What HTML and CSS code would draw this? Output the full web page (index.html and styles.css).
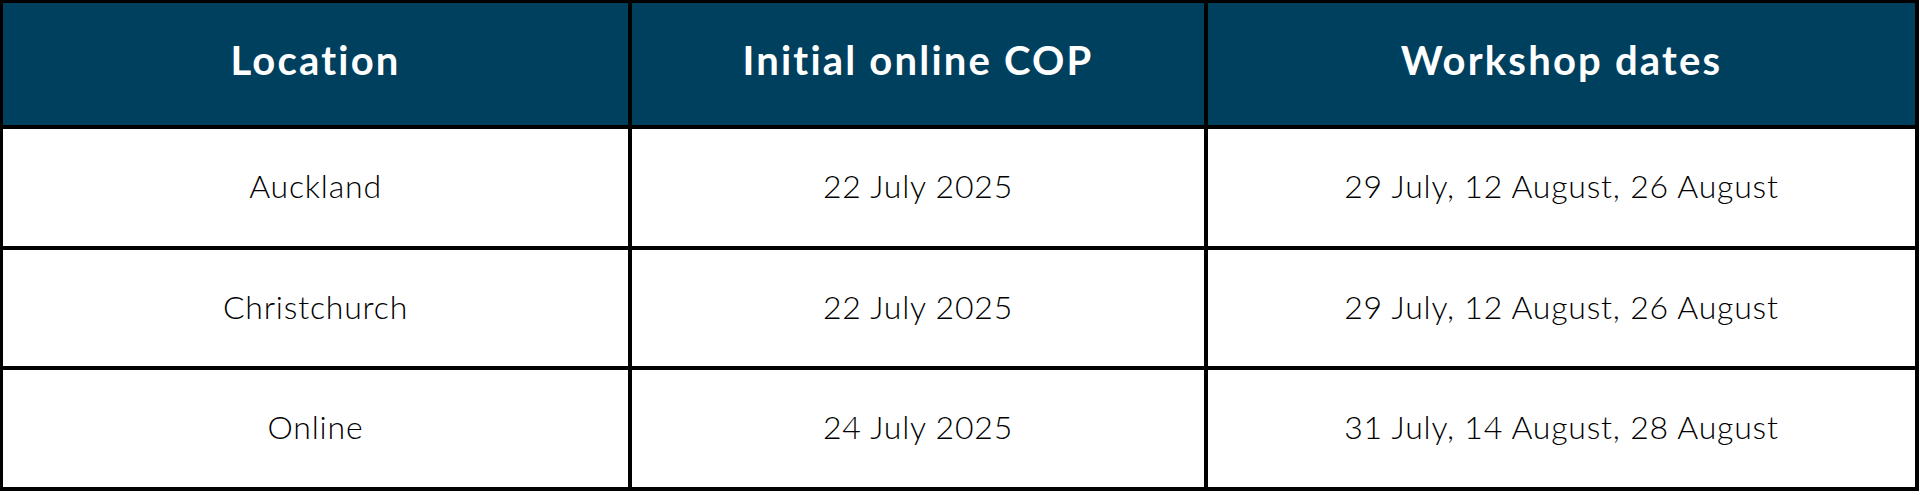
FILE: index.html
```html
<!DOCTYPE html>
<html lang="en">
<head>
<meta charset="utf-8">
<title>Workshop schedule</title>
<link rel="stylesheet" href="styles.css">
</head>
<body>
<div class="schedule" role="table">
  <div class="row head" role="row">
    <div class="cell" role="columnheader">Location</div>
    <div class="cell" role="columnheader">Initial online COP</div>
    <div class="cell" role="columnheader">Workshop dates</div>
  </div>
  <div class="row r1" role="row">
    <div class="cell" role="cell">Auckland</div>
    <div class="cell" role="cell">22 July 2025</div>
    <div class="cell" role="cell">29 July, 12 August, 26 August</div>
  </div>
  <div class="row r2" role="row">
    <div class="cell" role="cell">Christchurch</div>
    <div class="cell" role="cell">22 July 2025</div>
    <div class="cell" role="cell">29 July, 12 August, 26 August</div>
  </div>
  <div class="row r3" role="row">
    <div class="cell" role="cell">Online</div>
    <div class="cell" role="cell">24 July 2025</div>
    <div class="cell" role="cell">31 July, 14 August, 28 August</div>
  </div>
</div>
</body>
</html>
```

FILE: styles.css
```css
html, body {
  margin: 0;
  padding: 0;
  background: #ffffff;
}

.schedule {
  width: 1919px;
  box-sizing: border-box;
  border-top: 3px solid #000;
  border-left: 3px solid #000;
  display: grid;
  grid-template-rows: 126px 121px 120px 121px;
  font-family: "Lato", "Noto Sans", sans-serif;
}

.row {
  display: grid;
  grid-template-columns: 629px 576px 711px;
}

.cell {
  box-sizing: border-box;
  border-right: 4px solid #000;
  border-bottom: 4px solid #000;
  display: flex;
  align-items: center;
  justify-content: center;
  color: #000;
  font-size: 32px;
  font-weight: 300;
  letter-spacing: 0.8px;
  padding-bottom: 4px;
}

.head .cell {
  background: #00405f;
  color: #ffffff;
  font-size: 40px;
  font-weight: 700;
  letter-spacing: 2.2px;
  padding-bottom: 8px;
}
```
